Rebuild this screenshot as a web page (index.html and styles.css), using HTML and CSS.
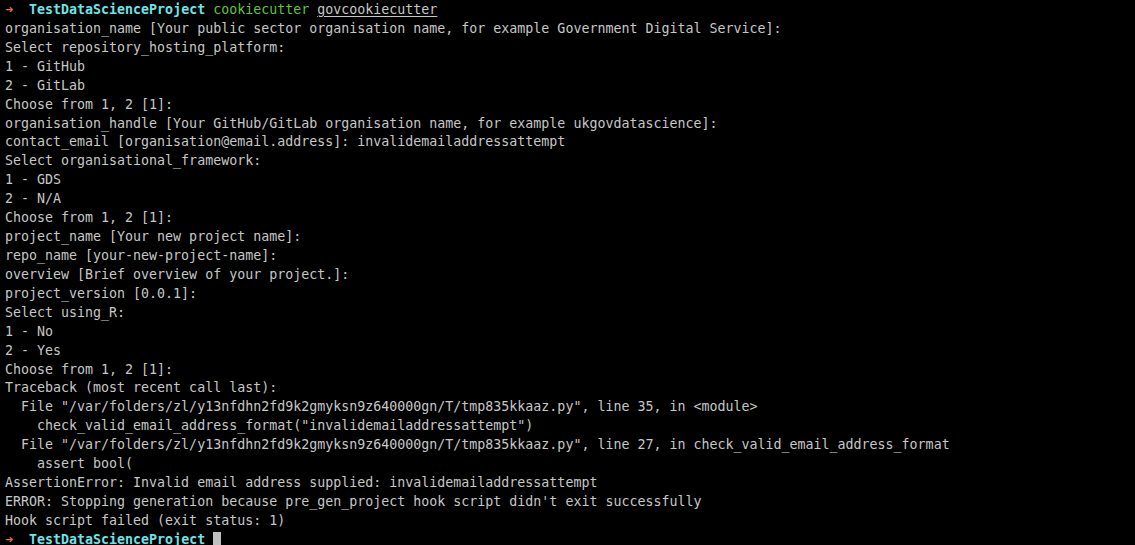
FILE: index.html
```html
<!DOCTYPE html>
<html>
<head>
  <meta charset="UTF-8">
  <meta name="viewport" content="width=device-width, initial-scale=1.0">
  <link rel="stylesheet" href="styles.css">
</head>
<body>
  <div class="terminal">
    <div class="line"><span class="prompt-arrow">➜</span>  <span class="prompt-dir">TestDataScienceProject</span> <span class="cmd">cookiecutter</span> <span class="arg">govcookiecutter</span></div>
    <div class="line">organisation_name [Your public sector organisation name, for example Government Digital Service]:</div>
    <div class="line">Select repository_hosting_platform:</div>
    <div class="line">1 - GitHub</div>
    <div class="line">2 - GitLab</div>
    <div class="line">Choose from 1, 2 [1]:</div>
    <div class="line">organisation_handle [Your GitHub/GitLab organisation name, for example ukgovdatascience]:</div>
    <div class="line">contact_email [organisation@email.address]: invalidemailaddressattempt</div>
    <div class="line">Select organisational_framework:</div>
    <div class="line">1 - GDS</div>
    <div class="line">2 - N/A</div>
    <div class="line">Choose from 1, 2 [1]:</div>
    <div class="line">project_name [Your new project name]:</div>
    <div class="line">repo_name [your-new-project-name]:</div>
    <div class="line">overview [Brief overview of your project.]:</div>
    <div class="line">project_version [0.0.1]:</div>
    <div class="line">Select using_R:</div>
    <div class="line">1 - No</div>
    <div class="line">2 - Yes</div>
    <div class="line">Choose from 1, 2 [1]:</div>
    <div class="line">Traceback (most recent call last):</div>
    <div class="line">  File "/var/folders/zl/y13nfdhn2fd9k2gmyksn9z640000gn/T/tmp835kkaaz.py", line 35, in &lt;module&gt;</div>
    <div class="line">    check_valid_email_address_format("invalidemailaddressattempt")</div>
    <div class="line">  File "/var/folders/zl/y13nfdhn2fd9k2gmyksn9z640000gn/T/tmp835kkaaz.py", line 27, in check_valid_email_address_format</div>
    <div class="line">    assert bool(</div>
    <div class="line">AssertionError: Invalid email address supplied: invalidemailaddressattempt</div>
    <div class="line">ERROR: Stopping generation because pre_gen_project hook script didn't exit successfully</div>
    <div class="line">Hook script failed (exit status: 1)</div>
    <div class="line"><span class="prompt-arrow">➜</span>  <span class="prompt-dir">TestDataScienceProject</span> <span class="cursor"></span></div>
  </div>
</body>
</html>
```

FILE: styles.css
```css
* {
  margin: 0;
  padding: 0;
  box-sizing: border-box;
}

body {
  background: #000000;
  height: 100vh;
  overflow: hidden;
}

.terminal {
  font-family: 'DejaVu Sans Mono', 'Liberation Mono', monospace;
  font-size: 13.3px;
  line-height: 18.93px;
  color: #c7c7c7;
  padding: 1px 5px 0;
}

.line {
  white-space: pre;
  height: 18.93px;
}

.prompt-arrow {
  color: #e5705f;
  font-weight: bold;
}

.prompt-dir {
  color: #6de4e8;
  font-weight: bold;
}

.cmd {
  color: #5fc53c;
}

.arg {
  text-decoration: underline;
  text-underline-offset: 2px;
}

.cursor {
  display: inline-block;
  width: 8px;
  height: 15px;
  background: #c0c0c0;
  vertical-align: -3px;
}
```
